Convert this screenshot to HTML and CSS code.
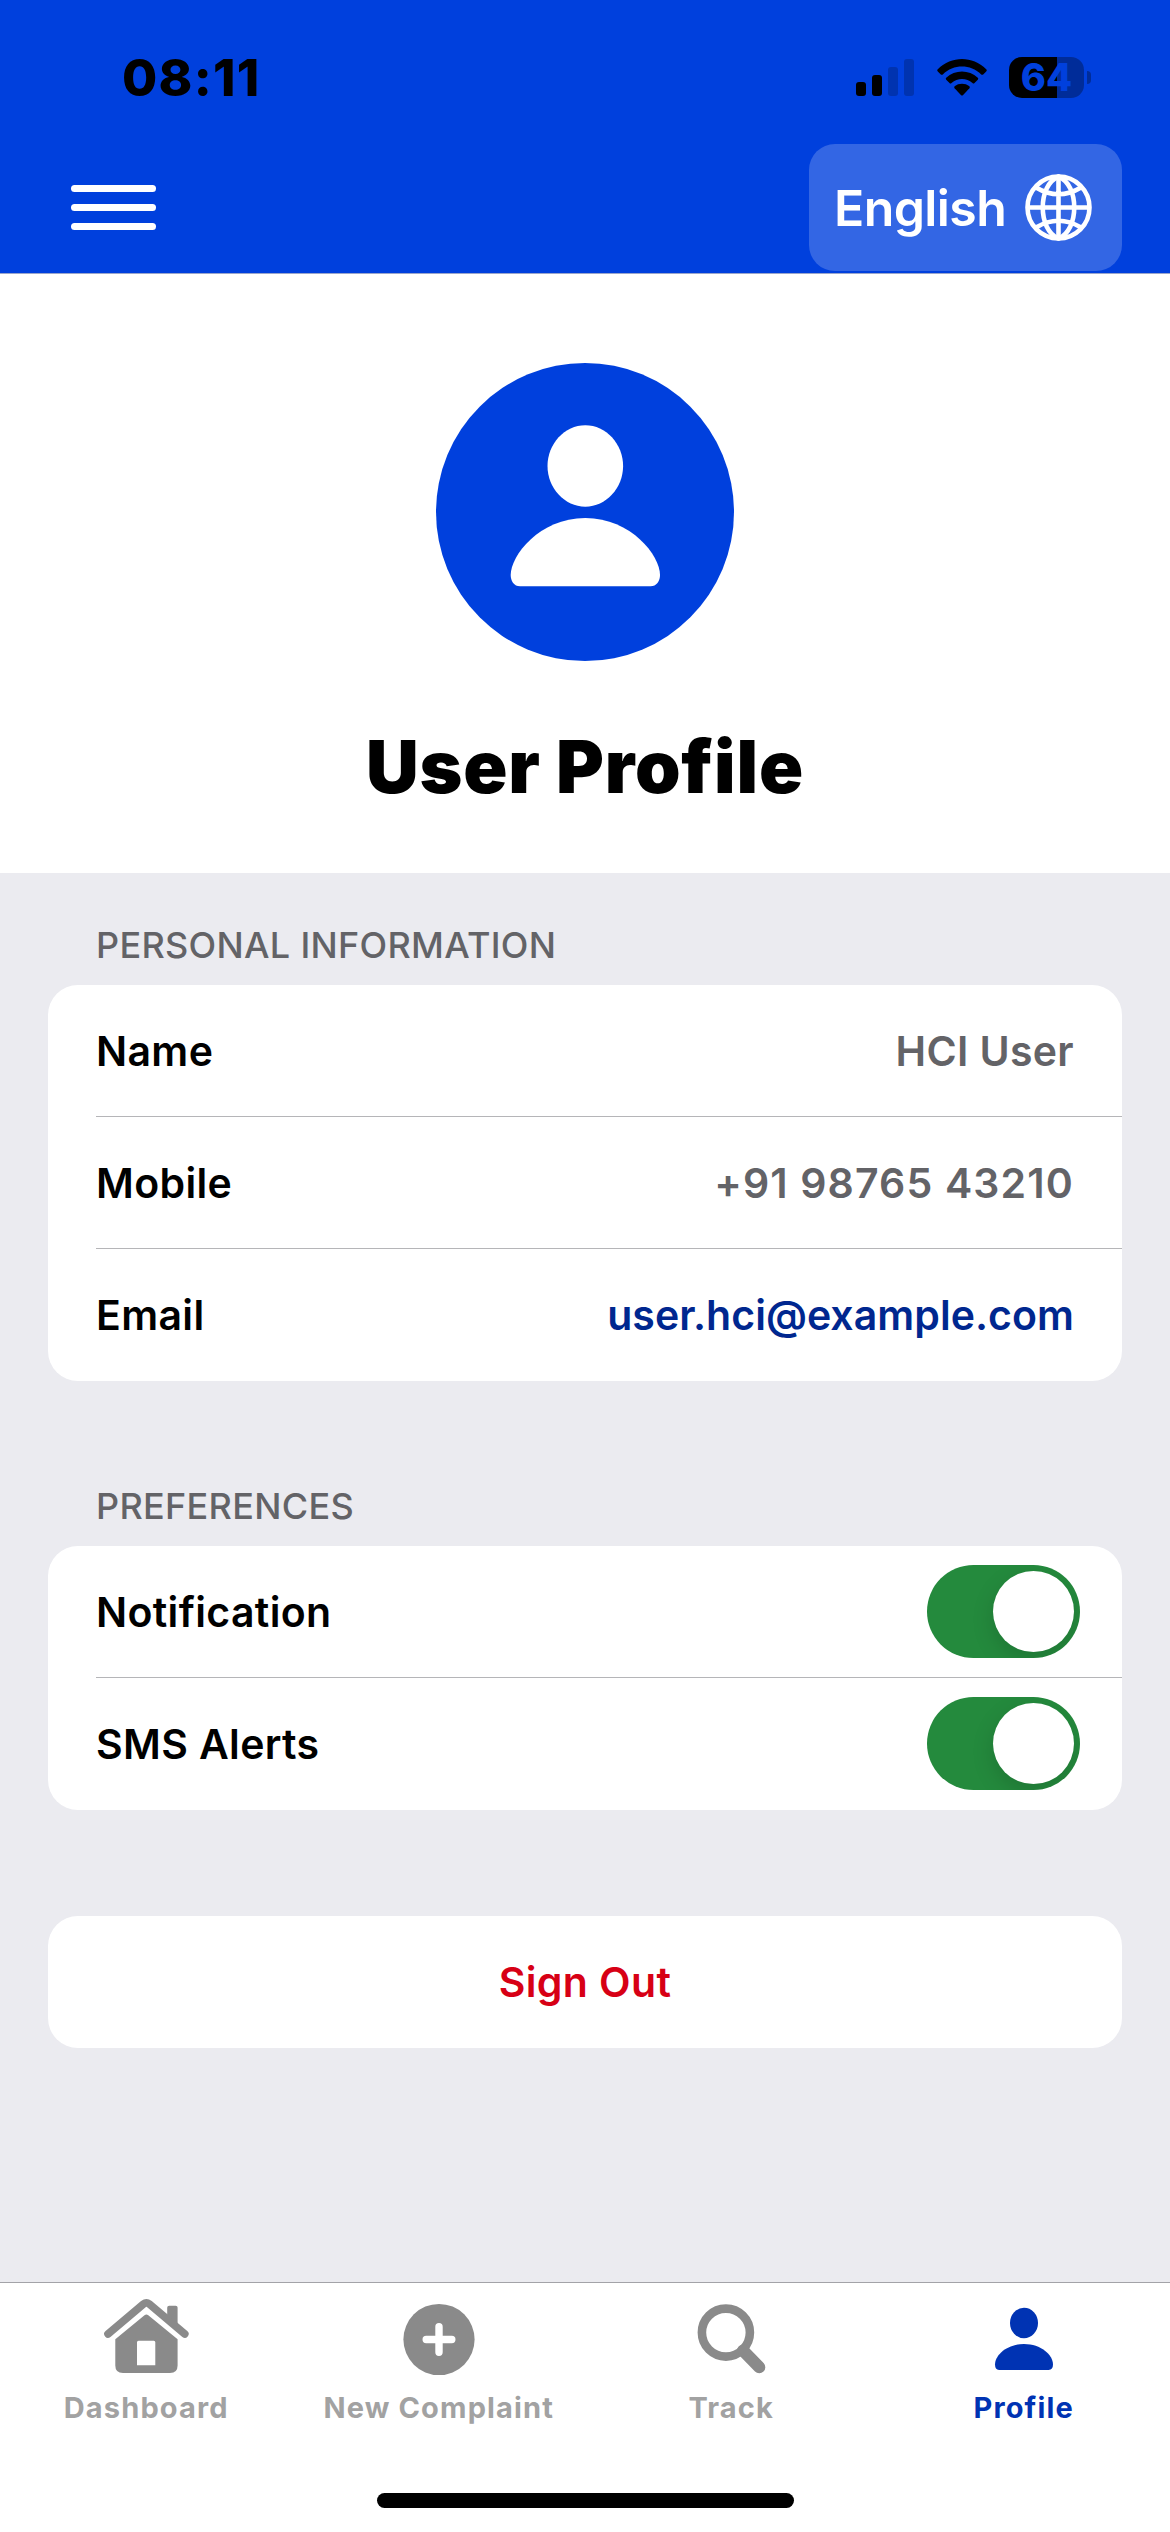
FILE: index.html
```html
<!DOCTYPE html>
<html lang="en">
<head>
<meta charset="utf-8">
<title>User Profile</title>
<link rel="stylesheet" href="styles.css">
</head>
<body>
<div class="screen">
  <header class="header">
    <div class="status">
      <span class="time">08:11</span>
      <div class="indicators">
        <svg class="signal" width="58" height="37" viewBox="0 0 58 37">
          <rect x="0" y="23" width="10" height="14" rx="3"/>
          <rect x="16" y="16" width="10" height="21" rx="3"/>
          <g opacity=".2"><rect x="32" y="8" width="10" height="29" rx="3"/><rect x="48" y="0" width="10" height="37" rx="3"/></g>
        </svg>
        <svg class="wifi" width="50" height="37" viewBox="0 0 50 37">
          <path d="M0.8 10.2C14.5-3.4 35.5-3.4 49.2 10.2Q50.4 11.400 49.200 12.400L46.200 15.400Q45.200 16.300 44.200 15.400C33.500 4.900 16.500 4.900 5.800 15.400Q4.800 16.300 3.800 15.400L0.800 12.400Q-0.400 11.400 0.800 10.200Z"/>
          <path d="M9.200 18.800C18 10.400 32 10.400 40.800 18.800Q41.800 19.800 40.800 20.800L37.500 24Q36.500 25 35.500 24C29.500 18.800 20.500 18.800 14.500 24Q13.500 25 12.500 24L9.200 20.800Q8.200 19.800 9.200 18.800Z"/>
          <path d="M17.600 27.200C21.800 23.900 28.200 23.900 32.400 27.200Q33.300 28.200 32.400 29.200L25.900 36.200Q25 37 24.100 36.200L17.600 29.200Q16.700 28.200 17.600 27.200Z"/>
        </svg>
        <div class="battery"><div class="battery-cell">64</div><i class="battery-nub"></i></div>
      </div>
    </div>
    <div class="navbar">
      <div class="menu"><i></i><i></i><i></i></div>
      <div class="language">
        <span>English</span>
        <svg width="67" height="67" viewBox="0 0 67 67" fill="none" stroke="#fff" stroke-width="4.600">
          <circle cx="33.500" cy="33.500" r="31"/>
          <path d="M33.500 2.500C12.500 11 12.500 56 33.500 64.500C54.500 56 54.500 11 33.500 2.500Z"/>
          <path d="M33.500 2V65M2 33.500H65M11 13.500Q33.500 27 56 13.500M11 53.500Q33.500 40 56 53.500"/>
        </svg>
      </div>
    </div>
  </header>

  <section class="hero">
    <svg class="avatar" width="298" height="298" viewBox="0 0 298 298">
      <circle cx="149" cy="149" r="149" fill="#0040dd"/>
      <g fill="#fff">
        <path d="M149.300 62.300C170 62.300 187.100 81 187.100 103C187.100 125 170 143.700 149.300 143.700C128.600 143.700 111.500 125 111.500 103C111.500 81 128.600 62.300 149.300 62.300Z"/>
        <path d="M84 223.300C78 223.300 74.700 218 74.700 212C74.700 193 103 155 149.300 155C195.600 155 224 193 224 212C224 218 220.500 223.300 214.500 223.300Z"/>
      </g>
    </svg>
    <h1 class="title">User Profile</h1>
  </section>

  <main class="content">
    <h2 class="section-title">PERSONAL INFORMATION</h2>
    <div class="card">
      <div class="row"><span>Name</span><span class="value name">HCI User</span></div>
      <div class="row"><span>Mobile</span><span class="value phone">+91 98765 43210</span></div>
      <div class="row"><span>Email</span><span class="value email">user.hci@example.com</span></div>
    </div>
    <h2 class="section-title spaced">PREFERENCES</h2>
    <div class="card">
      <div class="row"><span>Notification</span><div class="toggle"><i></i></div></div>
      <div class="row"><span>SMS Alerts</span><div class="toggle"><i></i></div></div>
    </div>
    <div class="card signout">Sign Out</div>
  </main>

  <nav class="tabs">
    <div class="tab">
      <svg width="92" height="84" viewBox="0 0 92 84" fill="#8a8a8a">
        <path d="M67.200 28V12.700Q67.200 10.700 69.200 10.700H75.600Q77.600 10.700 77.600 12.700V34Z"/>
        <path d="M8 39L43.500 9Q46.400 6.600 49.300 9L84.800 39" fill="none" stroke="#8a8a8a" stroke-width="7.600" stroke-linecap="round"/>
        <path fill-rule="evenodd" d="M15.300 44.300L44.500 20.200Q46.400 18.700 48.300 20.200L77.600 44.300V70.500Q77.600 78 70 78H23Q15.300 78 15.300 70.500ZM38.500 45.700Q37 45.700 37 47.200V70.300H55.300V47.200Q55.300 45.700 53.800 45.700Z"/>
      </svg>
      <span>Dashboard</span>
    </div>
    <div class="tab">
      <svg width="92" height="84" viewBox="0 0 92 84">
        <circle cx="46" cy="44.500" r="35.600" fill="#8a8a8a"/>
        <path d="M33.200 44.500H58.800M46 31.700V57.300" stroke="#fff" stroke-width="7.400" stroke-linecap="round"/>
      </svg>
      <span>New Complaint</span>
    </div>
    <div class="tab">
      <svg width="92" height="84" viewBox="0 0 92 84" fill="none" stroke="#8a8a8a">
        <circle cx="40.900" cy="37.600" r="24" stroke-width="8.600"/>
        <path d="M58 55.500L74.300 72.300" stroke-width="12" stroke-linecap="round"/>
      </svg>
      <span>Track</span>
    </div>
    <div class="tab active">
      <svg width="92" height="84" viewBox="0 0 92 84" fill="#0033b3">
        <ellipse cx="46" cy="28" rx="14" ry="15.200"/>
        <path d="M21 75Q17 74.500 17 69.500C17 60 29 49 46 49C63 49 75 60 75 69.500Q75 74.500 70.500 75Z"/>
      </svg>
      <span>Profile</span>
    </div>
  </nav>
  <footer class="home"><i></i></footer>
</div>
</body>
</html>
```
FILE: styles.css
```css
* { box-sizing: border-box; }
body { margin: 0; background: #fff; }
.screen { width: 1170px; height: 2532px; display: flex; flex-direction: column; font-family: Inter, "Liberation Sans", sans-serif; color: #000; }
i { display: block; }

.header { height: 274px; background: #0040dd; border-bottom: 1px solid #9aa6cc; }
.status { height: 144px; padding: 48px 79px 0 122px; display: flex; justify-content: space-between; }
.time { font-size: 51px; font-weight: 800; line-height: 60px; letter-spacing: 1.3px; }
.indicators { display: flex; align-items: flex-start; padding-top: 9px; }
.signal { margin: 2px 23px 0 0; }
.wifi { margin: 2px 22px 0 0; }
.battery { display: flex; align-items: center; gap: 3px; }
.battery-cell { width: 75px; height: 41px; border-radius: 13px; background: linear-gradient(90deg, #000 48px, #002c99 48px); color: #0040dd; font-size: 38px; font-weight: 800; line-height: 41px; text-align: center; }
.battery-nub { width: 4px; height: 13px; border-radius: 0 4px 4px 0; background: #002c99; }
.navbar { height: 127px; padding: 0 48px 0 71px; display: flex; justify-content: space-between; align-items: center; }
.menu { display: flex; flex-direction: column; gap: 11.400px; }
.menu i { width: 85px; height: 7.700px; border-radius: 4px; background: #fff; }
.language { width: 313px; height: 127px; padding: 0 30px 0 25px; border-radius: 26px; background: #3366e4; display: flex; justify-content: space-between; align-items: center; color: #fff; font-size: 50px; font-weight: 600; letter-spacing: -.6px; }

.hero { height: 599px; padding-top: 89px; display: flex; flex-direction: column; align-items: center; }
.avatar { display: block; }
.title { margin: 62px 0 0; font-size: 73px; font-weight: 900; line-height: 88px; letter-spacing: .8px; }

.content { flex: 1; padding: 0 48px; background: #ebebf0; }
.section-title { margin: 0; padding: 50px 48px 18px; font-size: 36px; font-weight: 550; line-height: 44px; letter-spacing: .3px; color: #636367; }
.spaced { margin-top: 53px; }
.card { border-radius: 30px; background: #fff; padding-left: 48px; }
.row { height: 132px; padding-right: 48px; display: flex; justify-content: space-between; align-items: center; border-bottom: 1px solid #b5b5b8; font-size: 41px; font-weight: 580; letter-spacing: .35px; }
.row:last-child { border-bottom-color: transparent; }
.value { color: #636367; }
.phone { letter-spacing: 1.150px; }
.email { color: #00278f; letter-spacing: .05px; }
.toggle { width: 153px; height: 93px; margin-right: -6px; padding: 6px; border-radius: 47px; background: #248a3d; display: flex; justify-content: flex-end; overflow: hidden; }
.toggle i { width: 81px; height: 81px; border-radius: 50%; background: #fff; box-shadow: 0 8px 22px rgba(0,0,0,.15); }
.signout { height: 132px; margin-top: 106px; padding: 0; display: flex; justify-content: center; align-items: center; font-size: 41px; font-weight: 580; letter-spacing: .4px; color: #d70015; }

.tabs { height: 161px; padding-top: 12px; border-top: 1px solid #a3a3a8; display: grid; grid-template-columns: repeat(4, 1fr); }
.tab { display: flex; flex-direction: column; align-items: center; font-size: 29px; font-weight: 700; line-height: 36px; letter-spacing: 1.150px; color: #a2a2a2; }
.tab svg { display: block; margin-bottom: 11px; }
.active { color: #0033b3; }
.home { height: 89px; padding-top: 50px; display: flex; justify-content: center; }
.home i { width: 417px; height: 15px; border-radius: 8px; background: #000; }
```
